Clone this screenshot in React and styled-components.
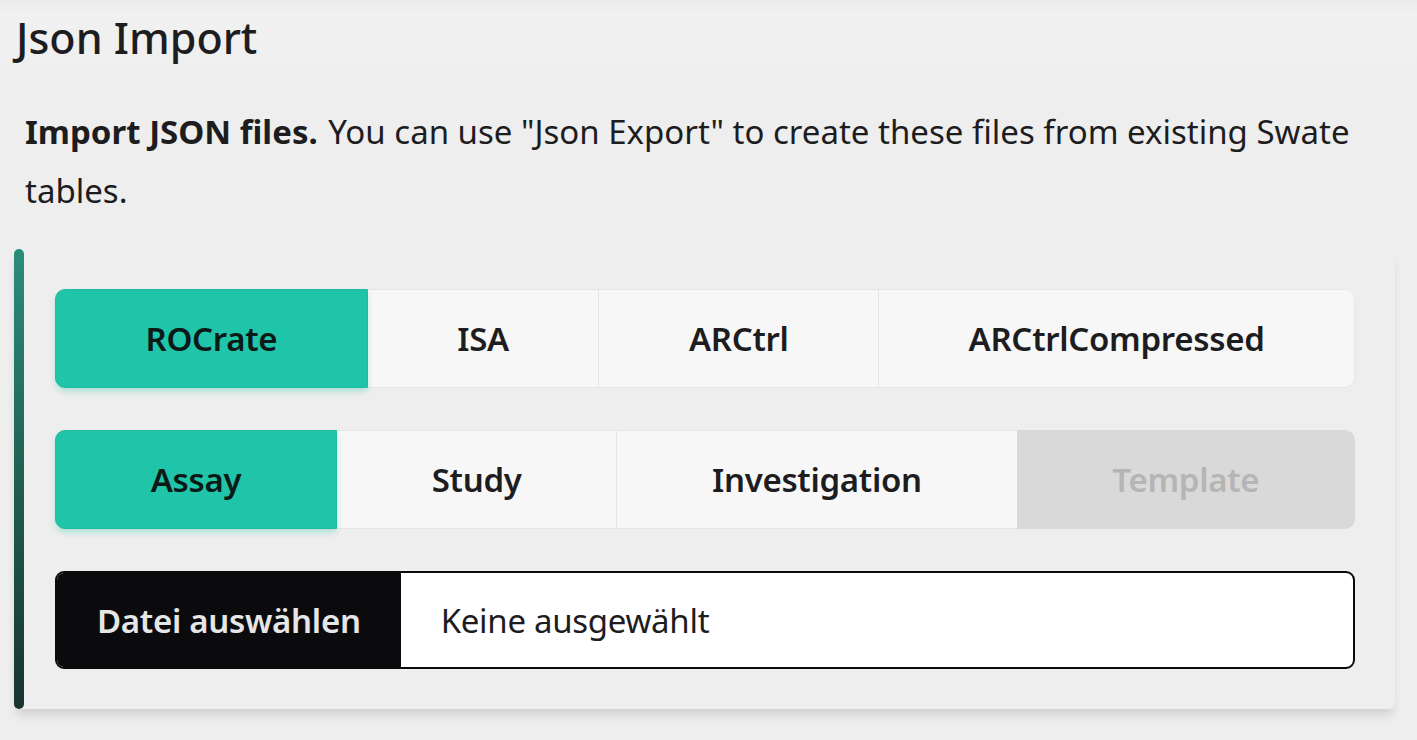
import React from "react";
import styled, { createGlobalStyle } from "styled-components";

const GlobalStyle = createGlobalStyle`
  html, body {
    margin: 0;
    padding: 0;
    background: #eeeeee;
    font-family: "Noto Sans", "Open Sans", sans-serif;
    color: #1d1d1f;
  }
`;

const Page = styled.div`
  padding: 0 22px 30px 14px;
  background: linear-gradient(#ebebeb 0px, #f1f1f1 14px, #eeeeee 100px);
`;

const Title = styled.h2`
  margin: 0 0 0 2px;
  padding-top: 10px;
  font-size: 43px;
  line-height: 56px;
  font-weight: 500;
`;

const Description = styled.p`
  margin: 36px 0 0 11px;
  font-size: 33px;
  line-height: 59px;
  b { font-weight: 700; margin-right: 2px; }
`;

const Card = styled.section`
  margin-top: 29px;
  display: flex;
  background: #eeeeee;
  border-radius: 6px;
  box-shadow: 0 8px 10px -2px rgba(0, 0, 0, 0.12);
`;

const AccentBar = styled.div`
  width: 10px;
  flex: none;
  border-radius: 5px;
  background: linear-gradient(#2a8e7b, #1f5a50 55%, #18332e);
`;

const CardBody = styled.div`
  flex: 1;
  padding: 40px 40px 40px 31px;
  display: flex;
  flex-direction: column;
  gap: 42px;
`;

const Join = styled.div`
  display: flex;
  height: 99px;
`;

const JoinButton = styled.button`
  flex: 1 1 auto;
  padding: 0 20px;
  border: 1px solid #e6e6e6;
  margin-left: -1px;
  background: ${(p) => (p.$active ? "#20c4a9" : p.$disabled ? "#d9d9d9" : "#f7f7f7")};
  border-color: ${(p) => (p.$active ? "#1fbca2" : p.$disabled ? "#d9d9d9" : "#e6e6e6")};
  color: ${(p) => (p.$disabled ? "#b5b5b5" : p.$active ? "#0b1a17" : "#1d1d1f")};
  box-shadow: ${(p) => (p.$active ? "0 4px 6px -1px rgba(32,196,169,0.35)" : "none")};
  position: relative;
  z-index: ${(p) => (p.$active ? 1 : 0)};
  font-family: inherit;
  font-size: 33px;
  font-weight: 600;
  letter-spacing: -0.3px;
  cursor: pointer;
  &:first-child { border-radius: 10px 0 0 10px; margin-left: 0; }
  &:last-child { border-radius: 0 10px 10px 0; }
`;

const FileInput = styled.label`
  display: flex;
  align-items: stretch;
  height: 98px;
  box-sizing: border-box;
  border: 2px solid #0a0a0a;
  border-radius: 9px;
  overflow: hidden;
  background: #ffffff;
`;

const FileButton = styled.span`
  display: flex;
  align-items: center;
  padding: 0 40px;
  background: #0b0b0d;
  color: #e6e6e6;
  font-size: 33px;
  font-weight: 600;
  letter-spacing: -0.3px;
`;

const FileName = styled.span`
  display: flex;
  align-items: center;
  padding-left: 40px;
  font-size: 33px;
  color: #1d1d1f;
  letter-spacing: -0.3px;
`;

const formats = ["ROCrate", "ISA", "ARCtrl", "ARCtrlCompressed"];
const types = ["Assay", "Study", "Investigation", "Template"];

export default function App() {
  return (
    <>
      <GlobalStyle />
      <Page>
        <Title>Json Import</Title>
        <Description>
          <b>Import JSON files.</b> You can use "Json Export" to create these files from existing Swate tables.
        </Description>
        <Card>
          <AccentBar />
          <CardBody>
            <Join>
              {formats.map((f, i) => (
                <JoinButton key={f} $active={i === 0}>{f}</JoinButton>
              ))}
            </Join>
            <Join>
              {types.map((t, i) => (
                <JoinButton key={t} $active={i === 0} $disabled={t === "Template"}>{t}</JoinButton>
              ))}
            </Join>
            <FileInput>
              <FileButton>Datei auswählen</FileButton>
              <FileName>Keine ausgewählt</FileName>
            </FileInput>
          </CardBody>
        </Card>
      </Page>
    </>
  );
}
